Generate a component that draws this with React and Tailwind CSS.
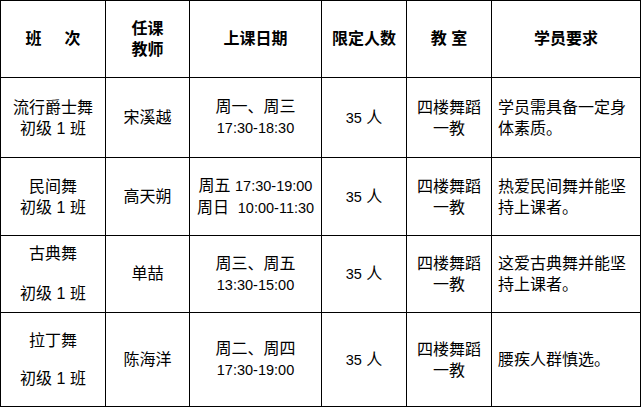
import React from 'react';

/* ─── Data ───────────────────────────────────────────────────────────────── */
const N = ({ children }) => <span className="text-[14.5px]">{children}</span>;

const rows = [
  {
    h: 'h-[79px]',
    cls: ['流行爵士舞', '初级 1 班'],
    teacher: '宋溪越',
    date: ['周一、周三', <N>17:30-18:30</N>],
    req: ['学员需具备一定身', '体素质。'],
  },
  {
    h: 'h-[77px]',
    cls: ['民间舞', '初级 1 班'],
    teacher: '高天朔',
    date: [<>周五 <N>17:30-19:00</N></>, <>周日  <N>10:00-11:30</N></>],
    req: ['热爱民间舞并能坚', '持上课者。'],
  },
  {
    h: 'h-[76px]',
    cls: ['古典舞', '\u00a0', '初级 1 班'],
    lead: 'leading-[20px]',
    teacher: '单喆',
    date: ['周三、周五', <N>13:30-15:00</N>],
    req: ['这爱古典舞并能坚', '持上课者。'],
  },
  {
    h: 'h-[93px]',
    cls: ['拉丁舞', '\u00a0', '初级 1 班'],
    lead: 'leading-[19px]',
    teacher: '陈海洋',
    date: ['周二、周四', <N>17:30-19:00</N>],
    req: ['腰疾人群慎选。'],
  },
];

/* ─── Cell ───────────────────────────────────────────────────────────────── */
function Cell({ children, left, className = '' }) {
  return (
    <div
      className={`bg-white flex flex-col justify-center ${
        left ? 'items-start pl-[6px]' : 'items-center text-center'
      } ${className}`}
    >
      {children}
    </div>
  );
}

function Lines({ items, lead = 'leading-[21px]' }) {
  return items.map((t, i) => (
    <div key={i} className={`whitespace-pre ${lead}`}>{t}</div>
  ));
}

/* ─── Page ───────────────────────────────────────────────────────────────── */
export default function App() {
  return (
    <div className="bg-white w-[642px] h-[407px] font-['Liberation_Sans','Noto_Sans_CJK_SC',sans-serif] text-[16px] text-black">
      <div className="w-[641px] bg-black p-px grid grid-cols-[104px_83px_131px_84px_84px_148px] gap-px">
        {/* Header */}
        <Cell className="h-[76px] font-bold">
          <div className="flex gap-[23px]"><span>班</span><span>次</span></div>
        </Cell>
        <Cell className="h-[76px] font-bold">
          <Lines items={['任课', '教师']} />
        </Cell>
        <Cell className="h-[76px] font-bold">上课日期</Cell>
        <Cell className="h-[76px] font-bold">限定人数</Cell>
        <Cell className="h-[76px] font-bold whitespace-pre">教 室</Cell>
        <Cell className="h-[76px] font-bold">学员要求</Cell>

        {rows.map((r, i) => (
          <React.Fragment key={i}>
            <Cell className={r.h}>
              <Lines items={r.cls} lead={r.lead} />
            </Cell>
            <Cell className={r.h}>{r.teacher}</Cell>
            <Cell className={r.h}>
              <Lines items={r.date} />
            </Cell>
            <Cell className={r.h}>
              <span><N>35</N> 人</span>
            </Cell>
            <Cell className={r.h}>
              <Lines items={['四楼舞蹈', '一教']} />
            </Cell>
            <Cell left className={r.h}>
              <Lines items={r.req} />
            </Cell>
          </React.Fragment>
        ))}
      </div>
    </div>
  );
}
